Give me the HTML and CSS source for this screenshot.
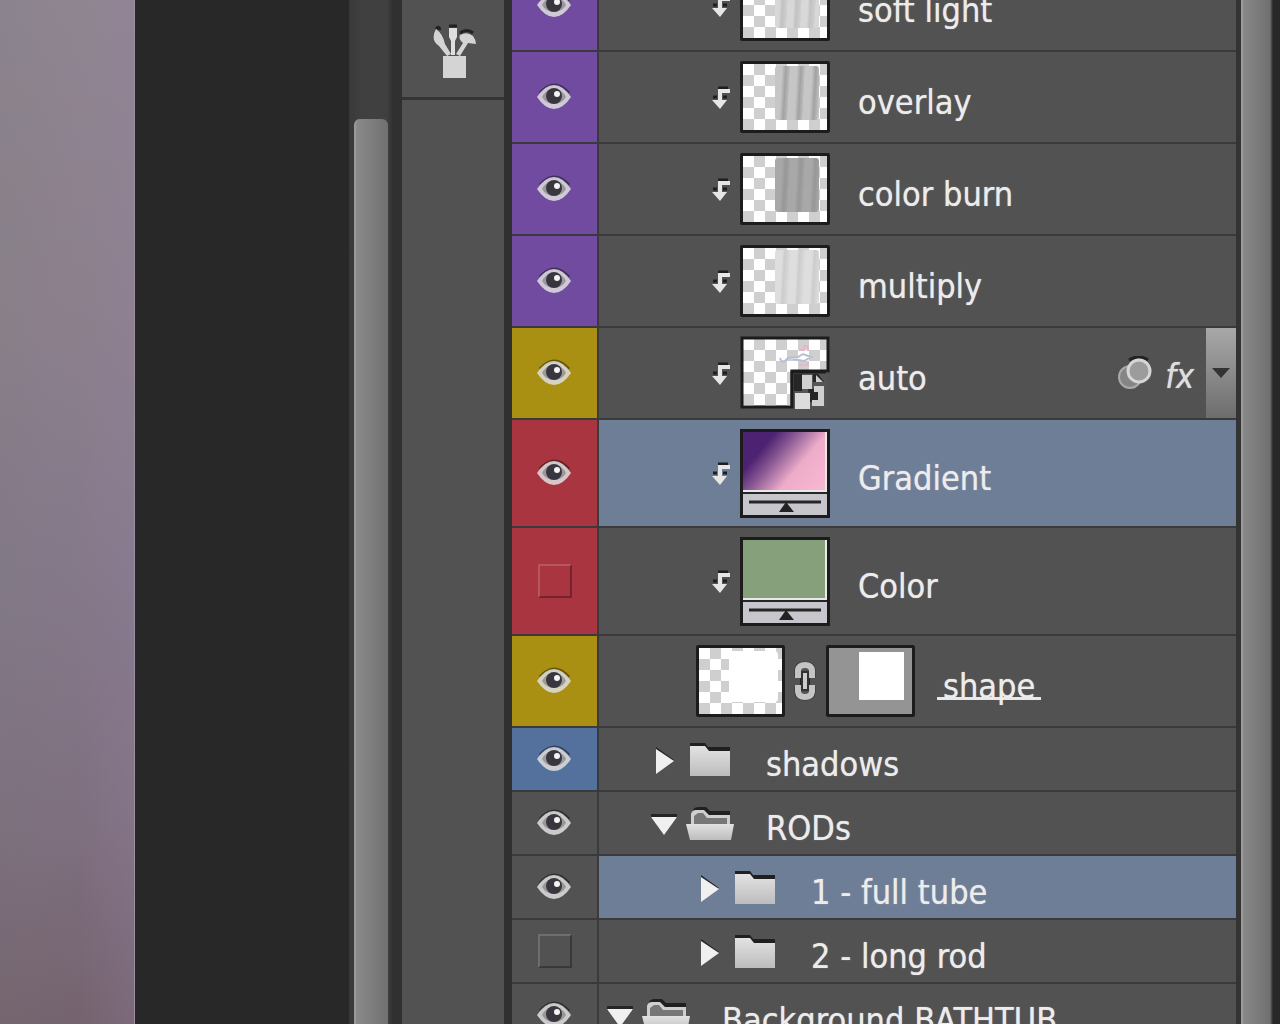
FILE: index.html
```html
<!DOCTYPE html>
<html lang="en">
<head>
<meta charset="utf-8">
<meta name="viewport" content="width=device-width, initial-scale=1">
<title>Layers</title>
<link rel="stylesheet" href="styles.css">
</head>
<body>
<svg class="defs" aria-hidden="true">
  <defs>
    <linearGradient id="metal" x1="0" y1="0" x2="0" y2="1"><stop offset="0" stop-color="#e2e2e2"/><stop offset="1" stop-color="#bdbdbd"/></linearGradient>
    <pattern id="checks" width="22" height="22" patternUnits="userSpaceOnUse" x="3" y="3">
      <rect width="22" height="22" fill="#fff"/><rect x="11" width="11" height="11" fill="#cfcfcf"/><rect y="11" width="11" height="11" fill="#cfcfcf"/>
    </pattern>
    <symbol id="eye" viewBox="0 0 36 30">
      <path d="M3 11Q17 -5 32 11" fill="none" stroke="#000" stroke-opacity=".4" stroke-width="3"/>
      <path d="M0 15Q8 3 17 3T34 15Q26 27 17 27T0 15Z" fill="#dcdcdc" fill-opacity=".88"/>
      <path d="M5 15Q9 7 17 7T29 15Q25 22 17 22T5 15Z" fill="#777" fill-opacity=".6"/>
      <circle cx="17" cy="14" r="8" fill="#3a3640"/>
      <circle cx="20" cy="12" r="3" fill="#f4f4f4"/>
    </symbol>
    <symbol id="clip" viewBox="0 0 18 24">
      <path d="M6 2H16M1 11H5M11 11H15" stroke="#1e1e1e" stroke-width="3"/>
      <path d="M18 3H6V14H0L8 23L15 14H10V7H18Z" fill="#e6e6e6"/>
    </symbol>
    <symbol id="folder" viewBox="0 0 48 38">
      <path d="M4 3H19L22 7H44V11H4Z" fill="#202020"/>
      <path d="M4 6H19L23 11H44V36H4Z" fill="url(#metal)"/>
    </symbol>
    <symbol id="folder-open" viewBox="0 0 48 38">
      <path d="M6 9Q7 3 12 3H20L24 7H44V12H6Z" fill="#202020"/>
      <path d="M5 21V10Q6 6 10 6H18L23 11H44V21Z" fill="#cfcfcf"/>
      <path d="M8 20V12L12 9H17L21 14H41V20Z" fill="#777"/>
      <path d="M0 20H48L45 36H4Z" fill="url(#metal)"/>
    </symbol>
    <symbol id="closed" viewBox="0 0 28 30">
      <path d="M5 3L23 16L20 18L5 7Z" fill="#252525"/><path d="M5 5L23 17L5 30Z" fill="#f0f0f0"/>
    </symbol>
    <symbol id="opened" viewBox="0 0 28 30">
      <path d="M0 6H26V10H0Z" fill="#252525"/><path d="M0 9H26L13 27Z" fill="#f0f0f0"/>
    </symbol>
  </defs>
</svg>

<div class="app">
  <main class="canvas" aria-label="Document"></main>
  <div class="pasteboard"></div>
  <div class="track"><div class="thumb"></div></div>
  <aside class="dock">
    <button class="tool" aria-label="Brush presets">
      <svg width="46" height="56" viewBox="0 0 46 56">
        <path d="M5 5Q8 1 9 6M18 2H26M29 9Q36 4 42 9" fill="none" stroke="#222" stroke-width="3"/>
        <path d="M5 5Q-1 16 8 22L16 32L20 30L14 20Q12 10 5 5Z" fill="#d4d4d4"/>
        <path d="M18 4H26V13L24 17V31H20V17L18 13Z" fill="#dedede"/>
        <path d="M29 11Q36 7 42 12Q45 16 45 20L37 19L29 32L25 30L32 19Q27 15 29 11Z" fill="#d4d4d4"/>
        <rect x="12" y="32" width="23" height="22" fill="#d4d4d4"/>
      </svg>
    </button>
  </aside>

  <section class="panel" aria-label="Layers">
    <ul class="layers">
      <li class="layer violet">
        <button class="visibility" aria-label="Toggle soft light"><svg class="eye"><use href="#eye"/></svg></button>
        <div class="content clipped"><svg class="clip"><use href="#clip"/></svg>
          <span class="preview"><span class="folds light"></span></span><span class="name">soft light</span></div>
      </li>
      <li class="layer violet">
        <button class="visibility" aria-label="Toggle overlay"><svg class="eye"><use href="#eye"/></svg></button>
        <div class="content clipped"><svg class="clip"><use href="#clip"/></svg>
          <span class="preview"><span class="folds medium"></span></span><span class="name">overlay</span></div>
      </li>
      <li class="layer violet">
        <button class="visibility" aria-label="Toggle color burn"><svg class="eye"><use href="#eye"/></svg></button>
        <div class="content clipped"><svg class="clip"><use href="#clip"/></svg>
          <span class="preview"><span class="folds dark"></span></span><span class="name">color burn</span></div>
      </li>
      <li class="layer violet">
        <button class="visibility" aria-label="Toggle multiply"><svg class="eye"><use href="#eye"/></svg></button>
        <div class="content clipped"><svg class="clip"><use href="#clip"/></svg>
          <span class="preview"><span class="folds pale"></span></span><span class="name">multiply</span></div>
      </li>
      <li class="layer yellow">
        <button class="visibility" aria-label="Toggle auto"><svg class="eye"><use href="#eye"/></svg></button>
        <div class="content clipped"><svg class="clip"><use href="#clip"/></svg>
          <svg class="smart" width="90" height="74" viewBox="0 0 90 74">
            <path d="M2 2H88V35H52V71H2Z" fill="url(#checks)" stroke="#1c1c1c" stroke-width="3"/>
            <path d="M40 22Q42 29 48 22L58 21L63 18L71 21L64 25L53 23" fill="#fff" stroke="#b9bfd2" stroke-width="2"/>
            <path d="M59 14H64V10H68V15M59 29H68V26" fill="none" stroke="#e6b8c2" stroke-width="2"/>
            <path d="M52 36H87V71H52Z" fill="#555"/>
            <path d="M52 71V36H86" fill="none" stroke="#1c1c1c" stroke-width="3"/>
            <path d="M54 38H62V55H54ZM73 38H78L84 46H73ZM68 53H78V66H70Z" fill="#262626"/>
            <path d="M62 39H72V53H62ZM76 39L83 46H76Z" fill="#d0d0d0"/>
            <path d="M74 50H84V70H72V64H78V56H74Z" fill="#d0d0d0"/>
            <rect x="55" y="57" width="15" height="16" fill="#dcdcdc"/>
          </svg>
          <span class="name">auto</span>
          <span class="effects">
            <svg width="36" height="34" viewBox="0 0 36 34">
              <path d="M12 4Q22 -2 31 4" fill="none" stroke="#222" stroke-width="3"/>
              <circle cx="13" cy="21" r="11" fill="#858585" stroke="#aaa" stroke-width="2"/>
              <circle cx="22" cy="15" r="11" fill="#9c9c9c" stroke="#d6d6d6" stroke-width="3"/>
            </svg>
            <span class="fx">fx</span>
          </span>
          <button class="expand" aria-label="Show effects"><svg width="20" height="14" viewBox="0 0 20 14"><path d="M1 2H19L10 12Z" fill="#333"/></svg></button>
        </div>
      </li>
      <li class="layer tall red selected">
        <button class="visibility" aria-label="Toggle Gradient"><svg class="eye"><use href="#eye"/></svg></button>
        <div class="content clipped"><svg class="clip"><use href="#clip"/></svg>
          <span class="fill"><span class="swatch gradient"></span><svg class="slider" viewBox="0 0 84 21"><path d="M6 8H78" stroke="#262626" stroke-width="3"/><path d="M43 8L51 18H36Z" fill="#222"/></svg></span>
          <span class="name">Gradient</span></div>
      </li>
      <li class="layer tall red">
        <button class="visibility" aria-label="Toggle Color"><span class="hidden-box"></span></button>
        <div class="content clipped"><svg class="clip"><use href="#clip"/></svg>
          <span class="fill"><span class="swatch green"></span><svg class="slider" viewBox="0 0 84 21"><path d="M6 8H78" stroke="#262626" stroke-width="3"/><path d="M43 8L51 18H36Z" fill="#222"/></svg></span>
          <span class="name">Color</span></div>
      </li>
      <li class="layer yellow">
        <button class="visibility" aria-label="Toggle shape"><svg class="eye"><use href="#eye"/></svg></button>
        <div class="content masked">
          <span class="preview"><span class="blank"></span></span>
          <svg class="link" width="26" height="44" viewBox="0 0 26 44">
            <path d="M4 18V11Q4 4 13 4T22 11V18M4 27V33Q4 40 13 40T22 33V27" fill="none" stroke="#333" stroke-width="3"/>
            <path d="M8 19H18V26H8Z" fill="#262626"/>
            <path d="M3 19V11Q4 3 13 3T23 11V19H17V12Q17 9 13 9T9 12V19ZM3 26V33Q4 41 13 41T23 33V26H17V32Q17 35 13 35T9 32V26Z" fill="#c4c4c4"/>
            <rect x="10" y="13" width="6" height="18" fill="#ccc" stroke="#333" stroke-width="2"/>
          </svg>
          <span class="preview mask"><span class="blank"></span></span>
          <span class="name base">shape</span></div>
      </li>
      <li class="layer group blue">
        <button class="visibility" aria-label="Toggle shadows"><svg class="eye"><use href="#eye"/></svg></button>
        <div class="content level-two"><button class="twist" aria-label="Expand shadows"><svg width="28" height="30"><use href="#closed"/></svg></button>
          <svg class="folder"><use href="#folder"/></svg><span class="name">shadows</span></div>
      </li>
      <li class="layer group">
        <button class="visibility" aria-label="Toggle RODs"><svg class="eye"><use href="#eye"/></svg></button>
        <div class="content level-two"><button class="twist" aria-label="Collapse RODs"><svg width="28" height="30"><use href="#opened"/></svg></button>
          <svg class="folder"><use href="#folder-open"/></svg><span class="name">RODs</span></div>
      </li>
      <li class="layer group selected">
        <button class="visibility" aria-label="Toggle 1 - full tube"><svg class="eye"><use href="#eye"/></svg></button>
        <div class="content level-three"><button class="twist" aria-label="Expand 1 - full tube"><svg width="28" height="30"><use href="#closed"/></svg></button>
          <svg class="folder"><use href="#folder"/></svg><span class="name">1 - full tube</span></div>
      </li>
      <li class="layer group">
        <button class="visibility" aria-label="Toggle 2 - long rod"><span class="hidden-box"></span></button>
        <div class="content level-three"><button class="twist" aria-label="Expand 2 - long rod"><svg width="28" height="30"><use href="#closed"/></svg></button>
          <svg class="folder"><use href="#folder"/></svg><span class="name">2 - long rod</span></div>
      </li>
      <li class="layer group">
        <button class="visibility" aria-label="Toggle Background BATHTUB"><svg class="eye"><use href="#eye"/></svg></button>
        <div class="content level-one"><button class="twist" aria-label="Collapse Background BATHTUB"><svg width="28" height="30"><use href="#opened"/></svg></button>
          <svg class="folder"><use href="#folder-open"/></svg><span class="name">Background BATHTUB</span></div>
      </li>
    </ul>
    <div class="scrollbar"></div>
  </section>
</div>
</body>
</html>
```
FILE: styles.css
```css
* { box-sizing: border-box; }
body { margin: 0; background: #282828; color: #ececec; font-family: "DejaVu Sans Condensed", "DejaVu Sans", sans-serif; font-size: 34px; line-height: 40px; }
button { margin: 0; padding: 0; border: 0; background: none; color: inherit; font: inherit; }
svg { display: block; flex: none; }
.defs { position: absolute; width: 0; height: 0; }

.app { display: flex; height: 100vh; overflow: hidden; }
.canvas {
  flex: 0 0 135px;
  border-right: 1px solid #9a90a0;
  background:
    linear-gradient(90deg, rgba(110, 120, 110, .12), transparent 60%, rgba(150, 130, 165, .2)),
    linear-gradient(#8f8591, #8c808d 30%, #85798a 55%, #7f7080 80%, #75636f);
}
.pasteboard { flex: 0 0 214px; background: #282828; }
.track { flex: 0 0 53px; padding: 119px 14px 0 5px; background: linear-gradient(90deg, #383838, #404040 12px 38px, #303030 44px); }
.thumb { height: 100%; border-radius: 6px 6px 0 0; border-left: 2px solid #9a9a9a; background: linear-gradient(90deg, #8a8a8a, #707070); }
.dock { flex: 0 0 102px; background: #525252; }
.tool { display: flex; width: 100%; height: 100px; padding: 24px 0 0 29px; border-bottom: 3px solid #343434; }

.panel { display: flex; flex: 1; min-width: 0; border-left: 8px solid #303030; }
.layers { flex: 1; min-width: 0; margin: -40px 0 0; padding: 0; list-style: none; }
.layer { display: flex; height: 92px; border-bottom: 2px solid #3a3a3c; background: #525252; }
.layer.tall { height: 108px; }
.layer.group { height: 64px; }
.visibility { display: grid; place-items: center; flex: 0 0 87px; border-right: 2px solid #3a3a3c; }
.eye { width: 36px; height: 30px; }
.violet .visibility { background: #714ba0; }
.yellow .visibility { background: #a99013; }
.red .visibility { background: #a93541; }
.blue .visibility { background: #54719e; }
.selected .content { background: #6f7e97; }
.hidden-box { width: 34px; height: 34px; border: 2px solid; border-color: rgba(255, 255, 255, .16) rgba(0, 0, 0, .3) rgba(0, 0, 0, .3) rgba(255, 255, 255, .16); }

.content { display: flex; flex: 1; align-items: center; min-width: 0; }
.clipped { padding-left: 113px; }
.masked { padding-left: 97px; }
.level-one { padding-left: 8px; }
.level-two { padding-left: 52px; }
.level-three { padding-left: 97px; }
.clip { width: 18px; height: 24px; margin: 2px 10px 0 0; }
.name { padding-top: 10px; margin-left: 28px; white-space: nowrap; text-shadow: 0 0 1px rgba(236, 236, 236, .7); }
.base { margin-left: 22px; padding-left: 6px; padding-right: 6px; background: linear-gradient(#e8e8e8, #e8e8e8) 0 41px / 100% 3px no-repeat; }
.twist { margin-right: 7px; }
.folder { width: 48px; height: 38px; }
.folder + .name { margin-left: 32px; }

.preview {
  display: flex; flex: none; width: 90px; height: 72px; padding: 2px 8px 10px 32px;
  border: 3px solid #1c1c1c; border-radius: 2px;
  background: repeating-conic-gradient(#cfcfcf 0 25%, #fff 0 50%) 0 0 / 22px 22px;
}
.folds { flex: 1; border-radius: 3px; }
.light { background: repeating-linear-gradient(93deg, #d8d8d8 0 6px, #c2c2c2 9px, #d0d0d0 14px); }
.medium { background: repeating-linear-gradient(93deg, #c6c6c6 0 7px, #a2a2a2 11px, #bdbdbd 15px); }
.dark { background: repeating-linear-gradient(93deg, #a8a8a8 0 7px, #979797 11px, #a3a3a3 15px); }
.pale { background: repeating-linear-gradient(93deg, #dedede 0 7px, #cccccc 10px, #dadada 15px); }
.blank { flex: 1; border-radius: 4px; background: #fff; }
.masked .preview { width: 89px; padding: 3px 4px 12px 30px; }
.masked .mask { padding: 4px 8px 14px 30px; background: #949494; }
.mask .blank { border-radius: 0; }
.link { margin: 0 8px 0 7px; }

.fill { display: flex; flex: none; flex-direction: column; width: 90px; height: 89px; border: 3px solid #1c1c1c; background: #c6c6cc; }
.swatch { height: 60px; border-right: 2px solid #e8e8e8; border-bottom: 2px solid #e8e8e8; }
.gradient { background: linear-gradient(130deg, #4d2272 25%, #8b5a94 42%, #edacc9 65%, #f8b8d2); }
.green { background: #87a07c; }
.slider { width: 100%; height: 23px; border-top: 2px solid #262626; }

.effects { display: flex; align-items: center; gap: 12px; margin-left: auto; margin-right: 12px; }
.fx { padding-top: 6px; font-style: italic; color: #dedede; text-shadow: 0 0 1px #dedede; }
.expand { display: grid; place-items: center; align-self: stretch; flex: 0 0 30px; background: linear-gradient(#a8a8a8, #6d6d6d); }
.scrollbar { flex: 0 0 44px; background: linear-gradient(90deg, #333 0 5px, #9a9a9a 5px 7px, #888 7px, #707070 34px, #282828 37px); }
```
